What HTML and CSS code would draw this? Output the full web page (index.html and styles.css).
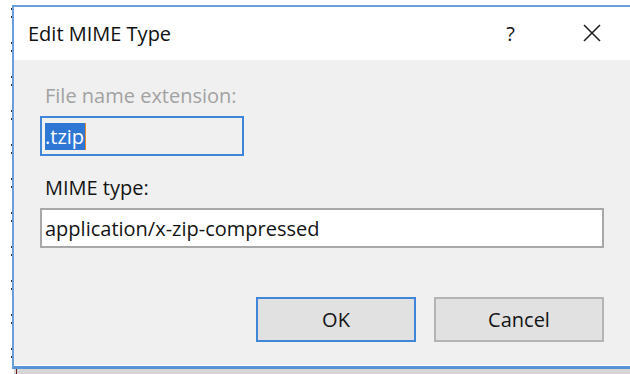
FILE: index.html
```html
<!DOCTYPE html>
<html lang="en">
<head>
    <meta charset="UTF-8">
    <title>Edit MIME Type</title>
    <link rel="stylesheet" href="styles.css">
</head>
<body>
    <div class="page">
        <div class="dots"></div>
        <div class="dialog">
            <div class="titlebar">
                <span class="title">Edit MIME Type</span>
                <span class="help">?</span>
                <span class="close">
                    <svg width="18" height="18" viewBox="0 0 18 18">
                        <path d="M1 1 L17 17 M17 1 L1 17" stroke="#222" stroke-width="1.6" fill="none"/>
                    </svg>
                </span>
            </div>
            <div class="content">
                <label class="label disabled" for="ext">File name extension:</label>
                <div class="field ext-field" id="ext"><span class="sel">.tzip</span><span class="caret"></span></div>

                <label class="label" for="mime">MIME type:</label>
                <div class="field mime-field" id="mime">application/x-zip-compressed</div>

                <div class="buttons">
                    <button class="btn btn-ok">OK</button>
                    <button class="btn btn-cancel">Cancel</button>
                </div>
            </div>
        </div>
    </div>
    <div class="under"><span class="mark"></span></div>
</body>
</html>
```

FILE: styles.css
```css
html, body {
    margin: 0;
    padding: 0;
    background: #ffffff;
    width: 630px;
    height: 374px;
    overflow: hidden;
    font-family: "Open Sans", "Noto Sans", sans-serif;
    color: #141414;
}
.page {
    display: flex;
    padding-top: 5px;
    padding-left: 11px;
}
.dots {
    width: 1px;
    height: 364px;
    background: repeating-linear-gradient(to bottom, transparent 0, transparent 3px, #333 3px, #333 5px, transparent 5px, transparent 11px, #333 11px, #333 13px, transparent 13px, transparent 34px);
}
.dialog {
    flex: 1;
    border-top: 2px solid #6a9fd9;
    border-left: 2px solid #6a9fd9;
    border-bottom: 3px solid #5b94d6;
}
.titlebar {
    height: 53px;
    background: #ffffff;
    display: flex;
    align-items: center;
    padding-left: 14px;
    font-size: 20px;
    color: #111;
}
.title {
    flex: 1;
    margin-top: -1px;
}
.help {
    font-size: 20px;
    margin-right: 68px;
}
.close {
    display: flex;
    margin-right: 29px;
    margin-top: -2px;
}
.content {
    height: 305px;
    background: #f0f0f0;
    padding: 23px 26px 0 26px;
    box-sizing: border-box;
    font-size: 20px;
}
.label {
    display: block;
    padding-left: 5px;
    line-height: 26px;
    margin-bottom: 7px;
}
.label.disabled {
    color: #a2a2a2;
}
.field {
    height: 40px;
    box-sizing: border-box;
    display: flex;
    align-items: center;
    padding-left: 3px;
    margin-bottom: 19px;
}
.ext-field {
    width: 204px;
    border: 2px solid #3f86d9;
    background: #f0f0f0;
}
.sel {
    background: #2f77d4;
    color: #ffffff;
    line-height: 27px;
    padding-right: 1px;
}
.caret {
    width: 1px;
    height: 27px;
    background: #e8892c;
}
.mime-field {
    background: #ffffff;
    border: 2px solid #a8a8a8;
    margin-bottom: 49px;
}
.buttons {
    display: flex;
    justify-content: flex-end;
    gap: 18px;
}
.btn {
    height: 45px;
    font-family: inherit;
    font-size: 20px;
    color: #141414;
    background: #e1e1e1;
    border-radius: 0;
    padding: 0;
}
.btn-ok {
    width: 160px;
    border: 2px solid #3f86d9;
}
.btn-cancel {
    width: 170px;
    border: 2px solid #b4b4b4;
}
.under {
    height: 5px;
    background: #d6d6d6;
    margin-left: 14px;
    position: relative;
}
.mark {
    position: absolute;
    left: 2px;
    top: 0;
    width: 1px;
    height: 5px;
    background: #6a1a1a;
}
```
